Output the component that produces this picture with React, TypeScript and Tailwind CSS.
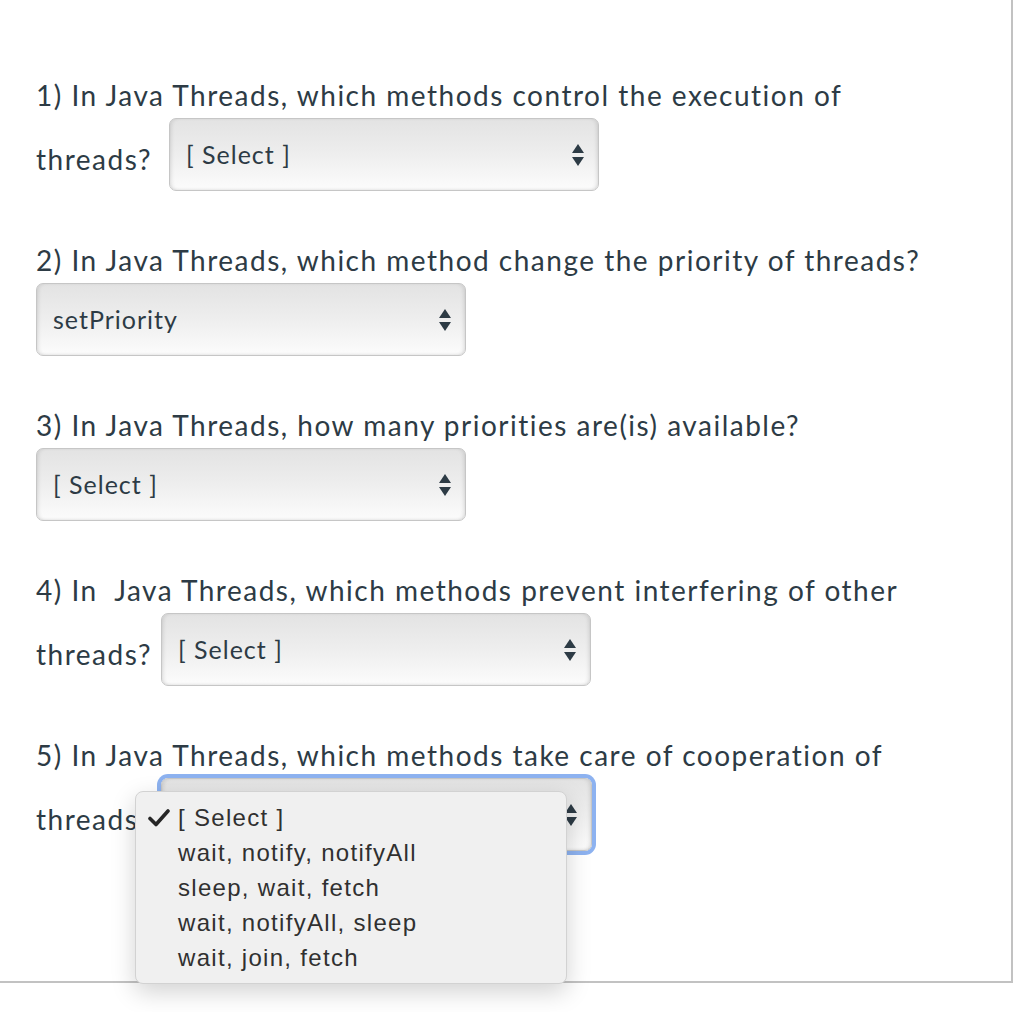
import React from "react";

const textFont = { fontFamily: "Lato, 'Open Sans', sans-serif" };

function Arrows() {
  return (
    <svg width="12" height="24" viewBox="0 0 12 24" className="shrink-0">
      <path d="M0 10 L6 1 L12 10 Z" fill="#2d3b45" />
      <path d="M0 14 L12 14 L6 23 Z" fill="#2d3b45" />
    </svg>
  );
}

function Check() {
  return (
    <svg width="22" height="18" viewBox="0 0 22 18" className="absolute left-[12px] top-[9px]">
      <path
        d="M2 9.5 L8 15.5 L20 2"
        fill="none"
        stroke="#262626"
        strokeWidth="3.6"
        strokeLinecap="round"
        strokeLinejoin="round"
      />
    </svg>
  );
}

function FakeSelect({
  value,
  width = "w-[430px]",
  focused = false,
}: {
  value: string;
  width?: string;
  focused?: boolean;
}) {
  return (
    <div
      className={`flex h-[73px] ${width} shrink-0 items-center justify-between rounded-[7px] border border-[#c6c6c6] bg-gradient-to-b from-[#e3e3e3] via-[#eeeeee] to-[#fcfcfc] pl-[16px] pr-[14px] shadow-[inset_3px_0_4px_-2px_rgba(0,0,0,0.12),inset_-3px_0_4px_-2px_rgba(0,0,0,0.12),inset_0_-2px_3px_-1px_rgba(0,0,0,0.06)] ${
        focused ? "ring-4 ring-[#8db2f0]" : ""
      }`}
    >
      <span className="text-[25px] tracking-[1px] text-[#2d3b45]" style={textFont}>
        {value}
      </span>
      <Arrows />
    </div>
  );
}

const options = [
  "[ Select ]",
  "wait, notify, notifyAll",
  "sleep, wait, fetch",
  "wait, notifyAll, sleep",
  "wait, join, fetch",
];

export default function App() {
  return (
    <div className="min-h-[1012px] w-[1024px] bg-white">
      <div
        className="relative h-[983px] w-[1013px] border-r-2 border-b-2 border-[#c2c2c2] pl-[36px] pt-[78px] text-[28px] tracking-[1.5px] text-[#2d3b45]"
        style={textFont}
      >
        {/* 1 */}
        <div className="h-[34px] leading-[34px]">
          1) In Java Threads, which methods control the execution of
        </div>
        <div className="mt-[6px] flex items-center">
          <span className="mt-[9px] leading-[34px]">threads?</span>
          <div className="ml-[17px]">
            <FakeSelect value="[ Select ]" />
          </div>
        </div>

        {/* 2 */}
        <div className="mt-[52px] h-[34px] leading-[34px]">
          2) In Java Threads, which method change the priority of threads?
        </div>
        <div className="mt-[6px] flex">
          <FakeSelect value="setPriority" />
        </div>

        {/* 3 */}
        <div className="mt-[52px] h-[34px] leading-[34px]">
          3) In Java Threads, how many priorities are(is) available?
        </div>
        <div className="mt-[6px] flex">
          <FakeSelect value="[ Select ]" />
        </div>

        {/* 4 */}
        <div className="mt-[52px] h-[34px] whitespace-pre leading-[34px]">
          4) In  Java Threads, which methods prevent interfering of other
        </div>
        <div className="mt-[6px] flex items-center">
          <span className="mt-[9px] leading-[34px]">threads?</span>
          <div className="ml-[9px]">
            <FakeSelect value="[ Select ]" />
          </div>
        </div>

        {/* 5 */}
        <div className="mt-[52px] h-[34px] leading-[34px]">
          5) In Java Threads, which methods take care of cooperation of
        </div>
        <div className="mt-[6px] flex items-center">
          <span className="mt-[9px] leading-[34px]">threads?</span>
          <div className="ml-[9px]">
            <FakeSelect value="[ Select ]" width="w-[431px]" focused />
          </div>
        </div>

        {/* open dropdown */}
        <div
          className="absolute left-[135px] top-[791px] w-[432px] rounded-[8px] border border-[#d2d2d2] bg-[#f0f0f0] py-[8px] shadow-[0_8px_24px_rgba(0,0,0,0.18)]"
          style={{ fontFamily: "'Liberation Sans', Arial, sans-serif" }}
        >
          {options.map((opt, i) => (
            <div
              key={opt}
              className="relative h-[35px] pl-[42px] text-[24px] leading-[35px] tracking-[1.3px] text-[#303030]"
            >
              {i === 0 ? <Check /> : null}
              {opt}
            </div>
          ))}
        </div>
      </div>
    </div>
  );
}
